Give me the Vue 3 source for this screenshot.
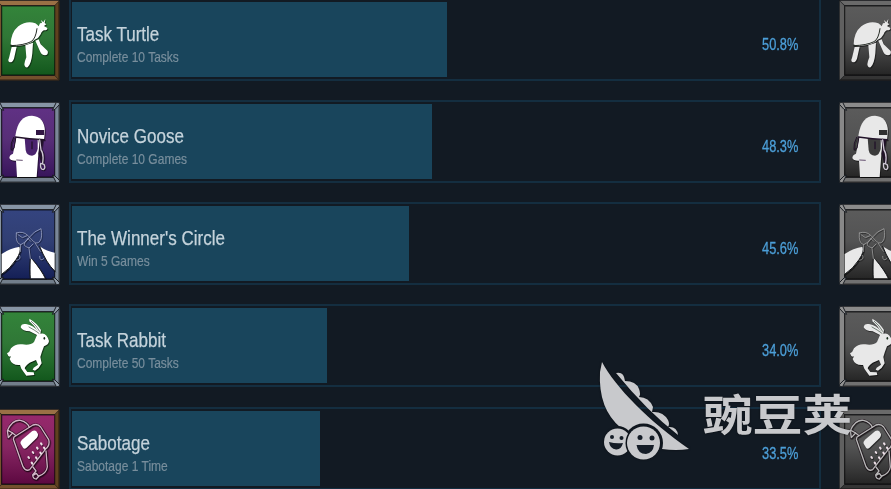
<script setup>
    const achievements = [
        { title: 'Task Turtle', text: 'Complete 10 Tasks', percent: '50.8%', bar: 375, art: 'turtle', panel: 'green', metal: 'bronze' },
        { title: 'Novice Goose', text: 'Complete 10 Games', percent: '48.3%', bar: 360, art: 'goose', panel: 'purple', metal: 'silver' },
        { title: "The Winner's Circle", text: 'Win 5 Games', percent: '45.6%', bar: 337, art: 'winner', panel: 'blue', metal: 'silver' },
        { title: 'Task Rabbit', text: 'Complete 50 Tasks', percent: '34.0%', bar: 255, art: 'rabbit', panel: 'green', metal: 'silver' },
        { title: 'Sabotage', text: 'Sabotage 1 Time', percent: '33.5%', bar: 248, art: 'phone', panel: 'pink', metal: 'bronze' }
    ];

    const panels = {
        green: ['#33843a', '#12571c'],
        purple: ['#603184', '#37155a'],
        blue: ['#34447f', '#141f56'],
        pink: ['#96286c', '#5c0840'],
        grey: ['#5b5b5b', '#252525']
    };

    // top, right, bottom, left bevel
    const metals = {
        bronze: ['#9a7045', '#5f411f', '#74502d', '#76522f'],
        silver: ['#8795a5', '#7a8797', '#727e8b', '#8793a0'],
        bronzeGrey: ['#6a6a6a', '#3c3c3c', '#343434', '#606060'],
        silverGrey: ['#8b8b8b', '#777777', '#717171', '#888888']
    };

    function metal(item, side) {
        return metals[side === 'left' ? item.metal : item.metal + 'Grey'];
    }
</script>

<template>
    <main class="page">
        <section v-for="item in achievements" :key="item.title" class="row">
            <template v-for="side in ['left', 'right']" :key="side">
                <svg class="icon" :class="side" viewBox="0 0 192 243" preserveAspectRatio="none">
                    <rect width="192" height="243" fill="#17191c" />
                    <path d="M3 2H189L176 16H17Z" :fill="metal(item, side)[0]" />
                    <path d="M190 3V240L176 226V17Z" :fill="metal(item, side)[1]" />
                    <path d="M3 241H189L176 227H17Z" :fill="metal(item, side)[2]" />
                    <path d="M2 3V240L16 226V17Z" :fill="metal(item, side)[3]" />
                    <path d="M188 5V238M5 239H187" fill="none" stroke="#000" stroke-opacity=".3" stroke-width="4" />
                    <rect x="17" y="18" width="159" height="207" :fill="`url(#${side === 'left' ? item.panel : 'grey'})`" stroke="#000" stroke-opacity=".5" stroke-width="4" />
                    <g v-if="item.metal === 'silver'" stroke="#1a1e24" stroke-width="3" :fill="side === 'left' ? '#8d99a6' : '#929292'">
                        <path d="M2 1H11L23 25L15 22L2 8Z" />
                        <path d="M190 1H181L169 25L177 22L190 8Z" />
                        <path d="M2 242H11L23 219L15 222L2 235Z" />
                        <path d="M190 242H181L169 219L177 222L190 235Z" />
                    </g>

                    <g class="art" :fill="side === 'left' ? '#fff' : '#e8e8e8'" stroke-linejoin="round" stroke-linecap="round">
                        <g v-if="item.art === 'turtle'">
                            <path d="M35 141L50 140L42 176Q38 188 29 187Q22 184 27 174Z" />
                            <path d="M76 136L99 128L97 160Q94 192 83 202Q74 204 73 193Q74 184 79 172Z" />
                            <path d="M106 122L116 118L122 133L143 153Q146 164 135 166Q126 166 121 156Z" />
                            <path d="M32 133Q33 97 55 79Q80 61 106 70Q113 74 116 79L120 70L126 69L123 60L130 67L136 57L134 69L139 73L132 78L142 84Q143 91 133 91Q126 92 122 103L114 114L104 119Q91 134 56 137Q38 139 32 133Z" />
                            <path d="M32 137Q71 136 93 125Q107 117 111 86" fill="none" stroke="#252b25" stroke-width="3" />
                        </g>
                        <g v-else-if="item.art === 'goose'">
                            <path d="M49 106H120L115 158L110 225H51L48 176Q32 177 28 168Q29 158 39 155Z" />
                            <path d="M41 106Q31 123 33 143L42 139L47 110" fill="none" stroke="#211229" stroke-width="3" />
                            <path d="M74 108H113V140Q110 158 96 161Q80 161 77 145Z" :fill="side === 'left' ? '#4a236e' : '#3c3c3c'" />
                            <path d="M96 120V140" fill="none" stroke="#211229" stroke-width="4" />
                            <path d="M46 102Q54 41 96 41Q133 43 135 88L132 113Q88 111 46 105Z" />
                            <path d="M46 105Q88 111 133 113" fill="none" stroke="#211229" stroke-width="4" />
                            <rect x="108" y="84" width="25" height="15" :fill="side === 'left' ? '#321744' : '#303030'" />
                            <path d="M119 114L123 144Q132 155 128 182M126 115L119 155L126 177" fill="none" stroke="#211229" stroke-width="7" />
                            <path d="M119 114L123 144Q132 155 128 182M122 184Q120 202 130 203Q138 199 132 187Z" fill="none" stroke="#cfc8d5" stroke-width="4" />
                            <path d="M50 174L67 175" stroke="#655070" stroke-width="3" />
                        </g>
                        <g v-else-if="item.art === 'winner'">
                            <path d="M5 150Q30 132 60 128Q65 143 48 167Q31 194 5 211Z" />
                            <path d="M91 163L98 167Q125 199 136 223H91Z" />
                            <path d="M119 127Q141 143 164 146V201Q139 178 119 127Z" />
                            <path d="M60 128Q65 143 48 167Q31 194 5 211M119 127Q139 178 164 201M91 163Q88 201 91 223M98 167Q125 199 136 223" fill="none" stroke="#151719" stroke-width="3" />
                            <path d="M49 87Q46 118 62 122Q74 118 84 104M49 87Q68 80 83 94L101 113Q112 122 120 111Q128 99 123 74Q101 82 90 98L75 115Q68 124 78 128L87 132L99 120M54 92L67 101L81 95M84 104L92 112M62 122L61 143M87 132L91 164M106 118L121 142M50 169Q66 165 58 154M119 157Q120 175 131 164" fill="none" :stroke="side === 'left' ? '#a9b0d0' : '#aaaaaa'" stroke-opacity=".7" stroke-width="3" />
                        </g>
                        <g v-else-if="item.art === 'rabbit'">
                            <path d="M88 38Q111 51 123 72L121 83Q140 78 147 105Q146 116 132 121Q125 139 121 153L125 172Q118 187 105 194L98 191L101 185L114 176L108 162L89 170Q76 179 74 187L82 198L101 199L103 207L79 209L64 188L60 177Q36 179 29 159L33 151Q25 155 21 142Q29 139 33 127Q47 112 67 115Q91 119 102 108L111 87L89 76Q68 76 62 64Q63 52 78 54Q101 57 115 78Q106 61 88 46Z" />
                            <path d="M87 63Q104 72 117 82M94 46Q110 59 119 76" fill="none" stroke="#37483a" stroke-width="2" />
                            <ellipse cx="133" cy="97" rx="2.5" ry="4" fill="#162b19" />
                        </g>
                        <g v-else>
                            <g v-for="pass in ['shade', 'line']" :key="pass" fill="none" :class="pass" :stroke="pass === 'shade' ? '#150710' : side === 'left' ? '#d3b5c7' : '#b7b7b7'">
                                <path d="M42 84L99 48Q113 43 122 54L146 92Q151 109 136 121L89 182Q77 188 69 173L40 91Z" />
                                <path d="M48 80L38 72L25 86L22 65Q37 31 61 34Q82 39 88 55M25 65L38 72" />
                                <path d="M99 174L108 186L98 198Q99 210 109 210L117 201Q139 193 142 174L138 126M99 199L109 193L115 201" />
                            </g>
                            <path d="M62 104Q60 98 66 92L97 66Q104 62 109 67L114 75Q115 82 110 87L79 117Q73 122 69 116Z" />
                            <path d="M85 144L87 147M98 129L100 132M111 116L113 119M123 103L125 106M95 161L97 164M108 145L110 148M121 131L123 134M132 116L134 119" stroke="#eee0e8" stroke-width="6" />
                        </g>
                    </g>
                </svg>
                <div v-if="side === 'left'" class="box">
                    <div class="bar" :style="{ width: item.bar + 'px' }"></div>
                    <div class="info">
                        <div>
                            <h3>{{ item.title }}</h3>
                            <p>{{ item.text }}</p>
                        </div>
                        <span class="percent">{{ item.percent }}</span>
                    </div>
                </div>
            </template>
        </section>

        <svg class="watermark" viewBox="0 0 301 139">
            <defs>
                <linearGradient v-for="(stops, name) in panels" :id="name" :key="name" x1="0" y1="0" x2="0" y2="1">
                    <stop offset="0" :stop-color="stops[0]" />
                    <stop offset=".45" :stop-color="stops[0]" stop-opacity=".88" />
                    <stop offset="1" :stop-color="stops[1]" />
                </linearGradient>
                <mask id="faces">
                    <rect width="301" height="139" fill="#fff" />
                    <circle cx="53.5" cy="93" r="19.5" fill="#000" />
                    <circle cx="27.5" cy="92" r="16" fill="#000" />
                </mask>
                <mask id="faceGap">
                    <rect width="301" height="139" fill="#fff" />
                    <circle cx="53.5" cy="93" r="18" fill="#000" />
                </mask>
            </defs>
            <g fill="#c8c9cc">
                <path d="M12 12C25 37 60 72 99 99Q86 101 72 99Q50 87 31 78Q8 59 10 22Z" mask="url(#faces)" />
                <path d="M26 23Q34 21 35 31Q46 31 49 39Q51 44 49 47Q59 47 63 57L62 62Q73 61 78 70Q80 74 78 77Q87 76 88 85Q57 61 26 23Z" />
                <circle cx="27.5" cy="92" r="13.5" mask="url(#faceGap)" />
                <circle cx="53.5" cy="93" r="16.5" />
            </g>
            <g fill="#151d27">
                <circle cx="22" cy="87" r="2" />
                <circle cx="31.5" cy="88" r="2" />
                <path d="M19 92Q26 94 33 93Q31 100 26 99.5Q20 99 19 92Z" />
                <circle cx="50" cy="87.5" r="2.5" />
                <circle cx="62" cy="88" r="2.5" />
                <path d="M46.5 95H64Q63 103 56 104Q48 104 46.5 95Z" />
            </g>
            <text x="112.500" y="81" textLength="150" lengthAdjust="spacingAndGlyphs">豌豆荚</text>
        </svg>
    </main>
</template>

<style>
    body {
        background-color: #121a23;
        overflow: hidden;
    }
</style>

<style scoped>
    .page {
        position: relative;
        display: flex;
        flex-direction: column;
        gap: 19.3px;
        width: 891px;
        height: 489px;
        overflow: hidden;
        background-color: #121a23;
        font-family: "Liberation Sans", Arial, sans-serif;
    }
    .row {
        display: flex;
        flex: none;
        height: 83px;
    }
    .row:first-child {
        margin-top: -2.5px;
    }
    .icon {
        flex: none;
        width: 64px;
        height: 81px;
        margin-top: 2px;
    }
    .icon.left {
        margin-left: -4px;
    }
    .icon.right {
        margin-left: 18px;
    }
    .art {
        transform: translateX(12px);
        filter: drop-shadow(2px 3px 2px rgba(0, 0, 0, .6));
    }
    .shade {
        stroke-width: 8px;
        stroke-opacity: .6;
    }
    .line {
        stroke-width: 4px;
    }
    .box {
        box-sizing: border-box;
        display: grid;
        flex: none;
        width: 752px;
        height: 83px;
        margin-left: 9px;
        padding: 2px 1px;
        border: 2px solid #142e40;
    }
    .bar, .info {
        grid-area: 1 / 1;
    }
    .bar {
        background-color: #19455c;
    }
    .info {
        display: flex;
        justify-content: space-between;
        padding: 20px 20px 0 5px;
    }
    h3, p {
        margin: 0;
        font-weight: normal;
        white-space: nowrap;
        transform-origin: left;
    }
    h3 {
        color: #c5d3db;
        font-size: 20.5px;
        line-height: 24px;
        -webkit-text-stroke: .25px #c5d3db;
        transform: scaleX(.83);
    }
    p {
        color: #788e9c;
        font-size: 15px;
        line-height: 21px;
        -webkit-text-stroke: .2px #788e9c;
        transform: scaleX(.8);
    }
    .percent {
        color: #4c9fd8;
        font-size: 16px;
        line-height: 20px;
        margin-top: 13px;
        -webkit-text-stroke: .3px #4c9fd8;
        transform: scaleX(.8);
        transform-origin: right;
    }
    .watermark {
        position: absolute;
        left: 590px;
        top: 350px;
        width: 301px;
        height: 139px;
        filter: drop-shadow(0 0 1px rgba(0, 0, 0, .5));
    }
    .watermark text {
        fill: #c8c9cc;
        font-family: "Noto Sans CJK SC", sans-serif;
        font-size: 45px;
        font-weight: 700;
        transform-origin: 0 81px;
        transform: scaleY(.96);
    }
</style>
